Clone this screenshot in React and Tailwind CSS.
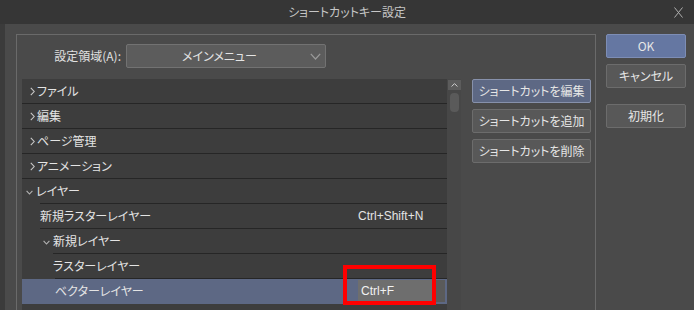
import React from "react";

const jp = "font-['Noto_Sans_CJK_JP','Noto_Sans',sans-serif] [font-feature-settings:'palt']";
const latin = "font-['Liberation_Sans',Arial,sans-serif]";

const ROWS = [
  { label: "ファイル", icon: "right", pad: 8, line: 0 },
  { label: "編集", icon: "right", pad: 8, line: 0 },
  { label: "ページ管理", icon: "right", pad: 8, line: 0 },
  { label: "アニメーション", icon: "right", pad: 8, line: 0 },
  { label: "レイヤー", icon: "down", pad: 4, line: 18 },
  { label: "新規ラスターレイヤー", pad: 18, line: 18, shortcut: "Ctrl+Shift+N" },
  { label: "新規レイヤー", icon: "down", pad: 21, line: 31 },
  { label: "ラスターレイヤー", pad: 31, line: 33 },
  { label: "ベクターレイヤー", pad: 33, line: 0, selected: true, editing: "Ctrl+F" },
];

const ChevronRight = () => (
  <svg width="5" height="9" viewBox="0 0 5 9" className="shrink-0 mr-[2px]">
    <path d="M0.8 0.8 L4.2 4.5 L0.8 8.2" fill="none" stroke="#c8c8c8" strokeWidth="1.1" />
  </svg>
);

const ChevronDown = () => (
  <svg width="7" height="5" viewBox="0 0 7 5" className="shrink-0 mr-[3px] mt-[3px]">
    <path d="M0.6 0.8 L3.5 4 L6.4 0.8" fill="none" stroke="#b4b4b4" strokeWidth="1.1" />
  </svg>
);

const Row = ({ row }) => (
  <div className="flex flex-col">
    <div
      className={`flex items-center h-[24px] ${row.selected ? "bg-[#5d6884]" : ""}`}
    >
      <div
        className="w-[336px] shrink-0 flex items-center"
        style={{ paddingLeft: row.pad }}
      >
        {row.icon === "right" && <ChevronRight />}
        {row.icon === "down" && <ChevronDown />}
        <span className={`${jp} text-[12px] leading-none text-[#e4e4e4]`}>{row.label}</span>
      </div>
      {row.shortcut && (
        <span className={`${latin} text-[12px] text-[#e4e4e4]`}>{row.shortcut}</span>
      )}
      {row.editing && (
        <div className="flex h-[22px] mt-[1px] self-start">
          <div className={`${latin} w-[74px] bg-[#6e6e6e] text-[12px] text-[#f2f2f2] pl-[3px] flex items-center`}>
            {row.editing}
          </div>
          <div className="w-[13px] bg-[#5a5a5a]" />
        </div>
      )}
    </div>
    <div className={`h-[1px] ${row.selected ? "bg-[#5d6884]" : "bg-[#262626]"}`} style={{ marginLeft: row.line }} />
  </div>
);

const Button = ({ children, primary, ok, className = "" }) => (
  <div
    className={`${jp} h-[24px] flex items-center justify-center text-[12px] text-[#e6e6e6] border rounded-[2px] ${
      ok
        ? "bg-[#6577a2] border-[#7d8db5]"
        : primary
        ? "bg-[#5d6884] border-[#8791ab]"
        : "bg-[#585858] border-[#6c6c6c]"
    } ${className}`}
  >
    {children}
  </div>
);

export default function App() {
  return (
    <div className="relative w-[694px] h-[310px] overflow-hidden bg-[#4a4a4a] flex flex-col">
      {/* title bar */}
      <div className="h-[24px] shrink-0 bg-[#363636] flex items-center">
        <div className="w-[20px]" />
        <div className={`${jp} flex-1 text-center text-[12px] text-[#c6c6c6]`}>ショートカットキー設定</div>
        <div className="w-[20px] flex items-center">
          <svg width="9" height="11" viewBox="0 0 9 11">
            <path d="M0.5 0.5 L8.5 10.5 M8.5 0.5 L0.5 10.5" stroke="#b0b0b0" strokeWidth="1" fill="none" />
          </svg>
        </div>
      </div>

      <div className="flex flex-1 min-h-0">
        <div className="w-[5px] bg-[#3b3b3b]" />

        {/* group box */}
        <div className="ml-[11px] mt-[10px] w-[580px] border border-b-0 border-[#6a6a6a] flex flex-col">
          <div className="flex items-center pt-[9px]">
            <div className={`${jp} w-[104px] text-right text-[12px] text-[#e0e0e0]`}>設定領域(A):</div>
            <div className="ml-[5px] w-[200px] h-[24px] bg-[#5c5c5c] border border-[#727272] rounded-[2px] flex items-center">
              <div className={`${jp} flex-1 text-center text-[12px] text-[#e4e4e4] pl-[2px]`}>メインメニュー</div>
              <svg width="11" height="7" viewBox="0 0 11 7" className="mr-[4px]">
                <path d="M0.8 0.8 L5.5 6 L10.2 0.8" fill="none" stroke="#9a9a9a" strokeWidth="1.2" />
              </svg>
            </div>
          </div>

          <div className="flex items-start mt-[11px] ml-[5px] flex-1 min-h-0">
            {/* list */}
            <div className="w-[425px] h-full bg-[#3d3d3d] flex flex-col">
              {ROWS.map((r) => (
                <Row key={r.label} row={r} />
              ))}
            </div>
            {/* scrollbar */}
            <div className="w-[14px] h-full bg-[#474747] flex flex-col items-center pt-[1px] mr-[1px]">
              <div className="w-[13px] h-[10px] bg-[#5c5c5c] flex items-center justify-center">
                <svg width="7" height="4" viewBox="0 0 7 4">
                  <path d="M0.6 3.5 L3.5 0.6 L6.4 3.5" fill="none" stroke="#d0d0d0" strokeWidth="1" />
                </svg>
              </div>
              <div className="mt-[3px] w-[9px] h-[19px] rounded-[4px] bg-[#5a5a5a]" />
            </div>

            {/* shortcut buttons */}
            <div className="ml-[10px] w-[119px] flex flex-col gap-[6px]">
              <Button primary>ショートカットを編集</Button>
              <Button>ショートカットを追加</Button>
              <Button>ショートカットを削除</Button>
            </div>
          </div>
        </div>

        {/* dialog buttons */}
        <div className="ml-[10px] mt-[10px] w-[80px] flex flex-col">
          <Button ok>OK</Button>
          <Button className="mt-[6px]">キャンセル</Button>
          <Button className="mt-[16px]">初期化</Button>
        </div>
      </div>

      {/* red annotation box */}
      <div className="absolute left-[343px] top-[265px] w-[93px] h-[40px] border-4 border-[#ff0000]" />
    </div>
  );
}
